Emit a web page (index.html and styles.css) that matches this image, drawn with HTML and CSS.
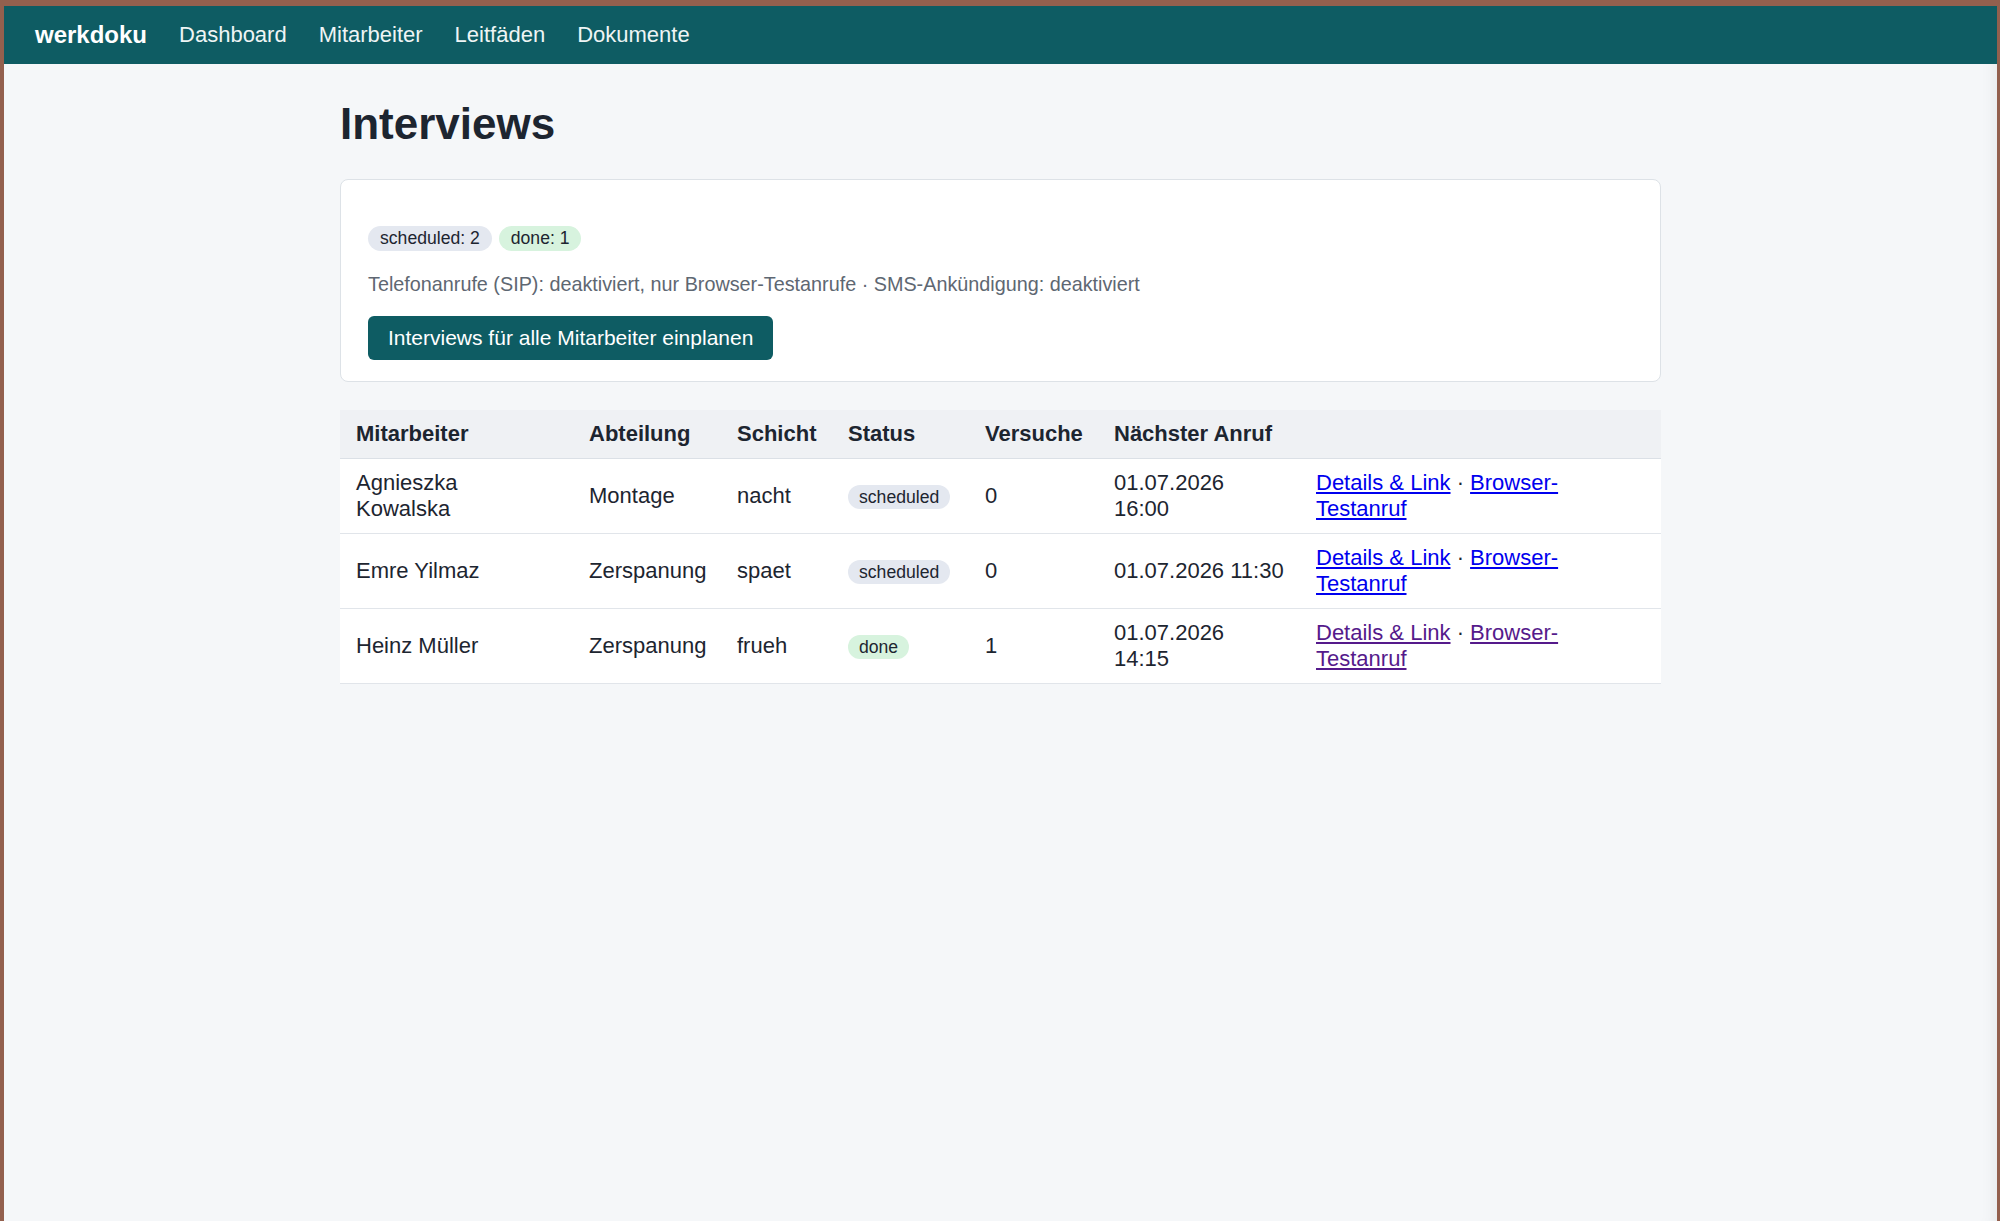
FILE: index.html
```html
<!DOCTYPE html>
<html lang="de">
<head>
    <meta charset="UTF-8">
    <meta name="viewport" content="width=device-width, initial-scale=1.0">
    <title>Interviews – werkdoku</title>
    <link rel="stylesheet" href="styles.css">
</head>
<body>
    <div class="window">
        <nav class="topnav">
            <a class="brand" href="#">werkdoku</a>
            <a href="#">Dashboard</a>
            <a href="#">Mitarbeiter</a>
            <a href="#">Leitfäden</a>
            <a href="#">Dokumente</a>
        </nav>
        <main class="container">
            <h1>Interviews</h1>
            <section class="card">
                <div class="badges">
                    <span class="pill pill-scheduled">scheduled: 2</span>
                    <span class="pill pill-done">done: 1</span>
                </div>
                <p class="muted">Telefonanrufe (SIP): deaktiviert, nur Browser-Testanrufe · SMS-Ankündigung: deaktiviert</p>
                <button class="btn" type="button">Interviews für alle Mitarbeiter einplanen</button>
            </section>

            <table class="interviews">
                <colgroup>
                    <col class="c-name">
                    <col class="c-dept">
                    <col class="c-shift">
                    <col class="c-status">
                    <col class="c-tries">
                    <col class="c-next">
                    <col class="c-links">
                </colgroup>
                <thead>
                    <tr>
                        <th>Mitarbeiter</th>
                        <th>Abteilung</th>
                        <th>Schicht</th>
                        <th>Status</th>
                        <th>Versuche</th>
                        <th>Nächster Anruf</th>
                        <th></th>
                    </tr>
                </thead>
                <tbody>
                    <tr>
                        <td>Agnieszka Kowalska</td>
                        <td>Montage</td>
                        <td>nacht</td>
                        <td><span class="pill pill-scheduled">scheduled</span></td>
                        <td>0</td>
                        <td>01.07.2026 16:00</td>
                        <td><a href="#">Details &amp; Link</a> · <a href="#">Browser-Testanruf</a></td>
                    </tr>
                    <tr>
                        <td>Emre Yilmaz</td>
                        <td>Zerspanung</td>
                        <td>spaet</td>
                        <td><span class="pill pill-scheduled">scheduled</span></td>
                        <td>0</td>
                        <td>01.07.2026 11:30</td>
                        <td><a href="#">Details &amp; Link</a> · <a href="#">Browser-Testanruf</a></td>
                    </tr>
                    <tr>
                        <td>Heinz Müller</td>
                        <td>Zerspanung</td>
                        <td>frueh</td>
                        <td><span class="pill pill-done">done</span></td>
                        <td>1</td>
                        <td>01.07.2026 14:15</td>
                        <td><a class="visited" href="#">Details &amp; Link</a> · <a class="visited" href="#">Browser-Testanruf</a></td>
                    </tr>
                </tbody>
            </table>
        </main>
    </div>
</body>
</html>
```

FILE: styles.css
```css
* {
    box-sizing: border-box;
}
body {
    margin: 0;
    background: #93604e;
    font-family: "Liberation Sans", Arial, Helvetica, sans-serif;
    font-size: 22px;
    color: #1d2530;
}
.window {
    margin: 6px 3px 0 4px;
    min-height: calc(100vh - 6px);
    background: #f5f7f9;
    box-shadow: inset -18px 0 18px -18px rgba(0, 0, 0, 0.08);
}

/* nav */
.topnav {
    height: 58px;
    background: #0e5c63;
    display: flex;
    align-items: center;
    gap: 32px;
    padding: 0 31px;
}
.topnav a {
    color: #eef5f5;
    text-decoration: none;
    font-size: 22px;
}
.topnav .brand {
    color: #fff;
    font-weight: bold;
    font-size: 24px;
}

/* page */
.container {
    width: 1321px;
    margin: 0 auto;
}
h1 {
    font-size: 44px;
    margin: 35px 0 30px;
    color: #1d2530;
}
.card {
    background: #fff;
    border: 1px solid #dde2e7;
    border-radius: 8px;
    padding: 46px 27px 21px;
}
.badges {
    display: flex;
    gap: 7px;
}
.pill {
    display: inline-block;
    font-size: 17.6px;
    line-height: 21px;
    padding: 2px 12px;
    border-radius: 999px;
    color: #1d2530;
}
.pill-scheduled {
    background: #e4e8f0;
}
.pill-done {
    background: #d7f3de;
}
.muted {
    font-size: 19.8px;
    color: #5e6772;
    margin: 22px 0 20px;
}
.btn {
    font-family: inherit;
    font-size: 21px;
    line-height: 24px;
    padding: 10px 20px;
    background: #0e5c63;
    color: #fff;
    border: none;
    border-radius: 6px;
}

/* table */
.interviews {
    width: 1321px;
    margin-top: 28px;
    border-collapse: collapse;
    table-layout: fixed;
}
.c-name { width: 233px; }
.c-dept { width: 148px; }
.c-shift { width: 111px; }
.c-status { width: 137px; }
.c-tries { width: 129px; }
.c-next { width: 202px; }
.c-links { width: 361px; }

.interviews th,
.interviews td {
    text-align: left;
    vertical-align: middle;
    padding: 11px 16px;
    border-bottom: 1px solid #e1e5ea;
}
.interviews th {
    background: #eff1f4;
    font-weight: bold;
    border-bottom-color: #dbe0e6;
}
.interviews td {
    background: #fff;
}
.interviews td .pill {
    padding: 2px 11px;
    line-height: 20px;
}
.interviews a {
    color: #0000ee;
}
.interviews a.visited {
    color: #551a8b;
}
```
